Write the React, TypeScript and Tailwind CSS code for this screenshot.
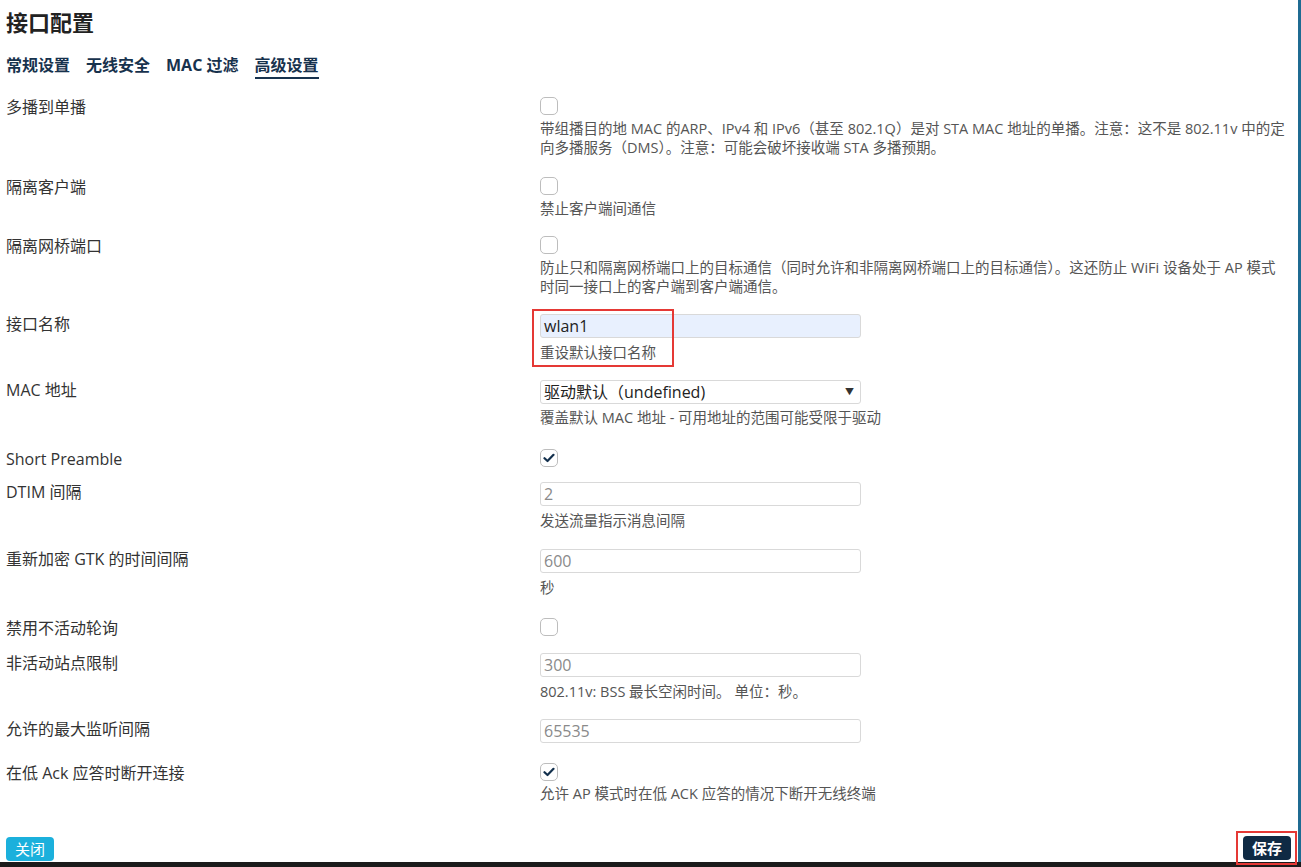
import React from "react";

const font = { fontFamily: '"Open Sans", "Noto Sans CJK SC", sans-serif' };

function Check({ checked }: { checked?: boolean }) {
  return (
    <div className="w-[18px] h-[18px] rounded-[5px] border border-[#bdbdbd] bg-white flex items-center justify-center">
      {checked && (
        <svg width="12" height="10" viewBox="0 0 12 10">
          <path d="M1.5 5.2 L4.5 8 L10.5 1.8" fill="none" stroke="#13304d" strokeWidth="2.2" strokeLinecap="round" strokeLinejoin="round" />
        </svg>
      )}
    </div>
  );
}

function Input({ value, dark, bg }: { value: string; dark?: boolean; bg?: string }) {
  return (
    <div
      className={`w-[321px] h-[24px] rounded-[3px] border border-[#d9d9d9] flex items-center px-[3px] text-[16px] ${
        dark ? "text-[#222]" : "text-[#8a8a8a]"
      } ${bg === "blue" ? "bg-[#e8f0fe]" : "bg-white"}`}
    >
      {value}
    </div>
  );
}

function Desc({ children, mt = "mt-[4px]" }: { children: React.ReactNode; mt?: string }) {
  return <div className={`${mt} text-[14.5px] leading-[19px] text-[#555] whitespace-nowrap`}>{children}</div>;
}

function Row({ label, h, children }: { label: string; h: string; children: React.ReactNode }) {
  return (
    <div className={`flex ${h}`}>
      <div className="w-[534px] shrink-0 text-[16px] leading-[20px] text-[#333]">{label}</div>
      <div className="flex-1">{children}</div>
    </div>
  );
}

export default function App() {
  return (
    <div className="w-[1301px] h-[867px] bg-white relative overflow-hidden" style={font}>
      <div className="flex flex-col h-[862px] pl-[6px] pr-[4px] border-r-[3px] border-[#1f6b92]">
        <h1 className="mt-[8px] text-[22px] leading-[28px] font-bold text-[#222]">接口配置</h1>
        <div className="mt-[18px] flex gap-[16px] text-[16px] font-bold text-[#17324d] leading-[22px]">
          <span>常规设置</span>
          <span>无线安全</span>
          <span>MAC 过滤</span>
          <span className="border-b-[2px] border-[#17324d] pb-[1px]">高级设置</span>
        </div>
        <div className="mt-[18px] flex flex-col">
          <Row label="多播到单播" h="h-[80px]">
            <Check />
            <Desc>
              带组播目的地 MAC 的ARP、IPv4 和 IPv6（甚至 802.1Q）是对 STA MAC 地址的单播。注意：这不是 802.11v 中的定
              <br />
              向多播服务（DMS）。注意：可能会破坏接收端 STA 多播预期。
            </Desc>
          </Row>
          <Row label="隔离客户端" h="h-[59px]">
            <Check />
            <Desc>禁止客户端间通信</Desc>
          </Row>
          <Row label="隔离网桥端口" h="h-[78px]">
            <Check />
            <Desc>
              防止只和隔离网桥端口上的目标通信（同时允许和非隔离网桥端口上的目标通信）。这还防止 WiFi 设备处于 AP 模式
              <br />
              时同一接口上的客户端到客户端通信。
            </Desc>
          </Row>
          <Row label="接口名称" h="h-[66px]">
            <div className="relative">
              <Input value="wlan1" dark bg="blue" />
              <Desc mt="mt-[5px]">重设默认接口名称</Desc>
              <div className="absolute left-[-8px] top-[-5px] w-[142px] h-[58px] border-[2px] border-[#e53935] pointer-events-none" />
            </div>
          </Row>
          <Row label="MAC 地址" h="h-[69px]">
            <div className="w-[321px] h-[24px] rounded-[3px] border border-[#d9d9d9] bg-white flex items-center justify-between pl-[3px] pr-[6px] text-[16px] text-[#222]">
              <span>驱动默认（undefined)</span>
              <span className="text-[9px] text-[#333]">▼</span>
            </div>
            <Desc mt="mt-[4px]">覆盖默认 MAC 地址 - 可用地址的范围可能受限于驱动</Desc>
          </Row>
          <Row label="Short Preamble" h="h-[33px]">
            <Check checked />
          </Row>
          <Row label="DTIM 间隔" h="h-[67px]">
            <Input value="2" />
            <Desc mt="mt-[5px]">发送流量指示消息间隔</Desc>
          </Row>
          <Row label="重新加密 GTK 的时间间隔" h="h-[69px]">
            <Input value="600" />
            <Desc mt="mt-[5px]">秒</Desc>
          </Row>
          <Row label="禁用不活动轮询" h="h-[35px]">
            <Check />
          </Row>
          <Row label="非活动站点限制" h="h-[66px]">
            <Input value="300" />
            <Desc mt="mt-[5px]">802.11v: BSS 最长空闲时间。 单位：秒。</Desc>
          </Row>
          <Row label="允许的最大监听间隔" h="h-[44px]">
            <Input value="65535" />
          </Row>
          <Row label="在低 Ack 应答时断开连接" h="h-[50px]">
            <Check checked />
            <Desc mt="mt-[3px]">允许 AP 模式时在低 ACK 应答的情况下断开无线终端</Desc>
          </Row>
        </div>
        <div className="mt-auto mb-[1px] flex justify-between items-end">
          <button className="w-[48px] h-[24px] rounded-[4px] bg-[#1bb0dc] text-white text-[15px] leading-[24px]">
            关闭
          </button>
          <div className="relative mr-[3px] mb-[1px]">
            <button className="w-[48px] h-[24px] rounded-[4px] bg-[#0f2a44] text-white text-[15px] font-bold leading-[24px]">
              保存
            </button>
            <div className="absolute left-[-7px] top-[-5px] w-[61px] h-[34px] border-[2px] border-[#e53935] pointer-events-none" />
          </div>
        </div>
      </div>
      <div className="h-[5px] bg-[#1b1b1b]" />
    </div>
  );
}
